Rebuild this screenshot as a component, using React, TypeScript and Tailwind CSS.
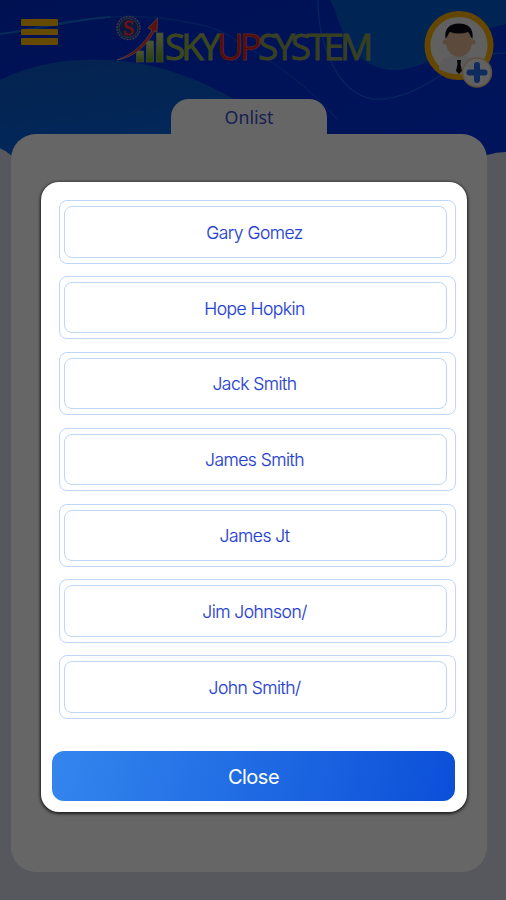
const NAMES = [
  "Gary Gomez",
  "Hope Hopkin",
  "Jack Smith",
  "James Smith",
  "James Jt",
  "Jim Johnson/",
  "John Smith/"
];

function HeaderWaves() {
  return (
    <svg className="absolute top-0 left-0" width="506" height="170" viewBox="0 0 506 170" fill="none">
      <defs>
        <linearGradient id="base" x1="0" y1="0" x2="1" y2="1">
          <stop offset="0" stopColor="#002cce" />
          <stop offset="1" stopColor="#0034e8" />
        </linearGradient>
        <linearGradient id="hill" x1="0.2" y1="0" x2="0.5" y2="1">
          <stop offset="0" stopColor="#0c58c8" />
          <stop offset="1" stopColor="#0464e4" />
        </linearGradient>
      </defs>
      <path d="M0 0H506V152Q496 152 487 155L400 160H20L11 155Q5 150 0 148Z" fill="url(#base)" />
      <path d="M0 80C40 61 75 59 106 60C155 61 205 82 232 98L260 160H20L11 155Q5 150 0 148Z" fill="url(#hill)" />
      <path d="M330 0C337 12 339 26 346 39C358 62 379 71 398 70C435 68 460 34 506 24V0Z" fill="#005ad2" />
      <path d="M0 34C50 25 105 12 160 18C200 23 226 29 241 45C270 58 310 88 337 119" stroke="#1268e0" strokeWidth="1.3" opacity="0.5" />
      <path d="M0 34C28 31 70 20 110 17" stroke="#1b8ee8" strokeWidth="1.8" opacity="0.6" />
      <path d="M318 0C318 40 335 93 373 99C401 101 426 85 443 74C465 59 485 53 506 53" stroke="#1973ee" strokeWidth="1.3" opacity="0.65" />
    </svg>
  );
}

function Logo() {
  return (
    <div className="flex w-[262px] items-start">
      <svg className="shrink-0" width="51" height="52" viewBox="114 14 51 52">
        <defs>
          <linearGradient id="bar" x1="0" y1="0" x2="0" y2="1">
            <stop offset="0" stopColor="#c0d98a" />
            <stop offset="1" stopColor="#64a010" />
          </linearGradient>
        </defs>
        <circle cx="128.500" cy="28" r="11.500" fill="#1c3c9c" stroke="#8c91b4" strokeWidth="1.500" strokeDasharray="2 1" />
        <circle cx="128.500" cy="28" r="9.500" fill="none" stroke="#8888ac" strokeWidth="0.800" />
        <text x="128.500" y="34.500" textAnchor="middle" fontFamily="Liberation Serif, serif" fontSize="20" fill="#ff3030" stroke="#ff3030" strokeWidth="0.800">S</text>
        <g fill="url(#bar)" stroke="#a9b49a" strokeWidth="0.700">
          <rect x="136.500" y="51" width="7" height="11" />
          <rect x="146.500" y="41" width="7" height="21" />
          <rect x="156.500" y="33" width="6.500" height="29" />
        </g>
        <path d="M117 60C134 54 145 43 152 30L148 28L157.500 18L157 32L154.500 31C146 46 135 57 117 60Z" fill="#ec2818" stroke="#d9b4ae" strokeWidth="0.700" />
      </svg>
      <div className="mt-[5px] flex font-['Open_Sans',sans-serif] text-[37px] leading-[54px] font-medium tracking-[-4px]">
        <span className="text-[#8fb52c] [-webkit-text-stroke:0.800px_#a1ad78]">SKY</span>
        <span className="text-[#e81512] [-webkit-text-stroke:0.800px_#cf5b55]">UP</span>
        <span className="text-[#8aa040] [-webkit-text-stroke:0.800px_#8ea070]">SYSTEM</span>
      </div>
    </div>
  );
}

function Avatar() {
  return (
    <svg width="72" height="80" viewBox="422 9 72 80">
      <circle cx="459" cy="45.500" r="31.500" fill="#f0f0f0" stroke="#fbb000" strokeWidth="6" />
      <path d="M439 69C439 59 446 57 453 56H465C473 57 479 60 479 69C468 76 450 76 439 69Z" fill="#e6e6ea" />
      <ellipse cx="459" cy="42" rx="13" ry="15" fill="#e6bc98" />
      <circle cx="445" cy="42" r="2.500" fill="#e6bc98" />
      <circle cx="473" cy="42" r="2.500" fill="#e6bc98" />
      <path d="M445.500 39C444 28 450 23.500 459 23.500C468 23.500 474 28 472.500 39C470 36 470 34 468 32C462 34 456 34 450 32C448 34 448 36 445.500 39Z" fill="#0c0c14" />
      <path d="M457 60H461L460.500 64L462 71L459 74L456 71L457.500 64Z" fill="#111" />
      <circle cx="477" cy="72.500" r="14.500" fill="#f3f3f6" stroke="#f2c391" strokeWidth="1.500" />
      <path d="M477 65V80M469.500 72.500H484.500" stroke="#286bea" strokeWidth="6" strokeLinecap="round" />
    </svg>
  );
}

function Header() {
  return (
    <header className="relative h-[99px]">
      <HeaderWaves />
      <div className="relative flex items-start">
        <button className="mt-[19px] ml-[21px] flex w-[37px] flex-col gap-[3px]">
          <span className="h-[6.500px] rounded-[1px] bg-[#ffb800]"></span>
          <span className="h-[6.500px] rounded-[1px] bg-[#ffb800]"></span>
          <span className="h-[6.500px] rounded-[1px] bg-[#ffb800]"></span>
        </button>
        <div className="mt-[14px] ml-[56px]"><Logo /></div>
        <div className="mt-[9px] ml-[46px]"><Avatar /></div>
      </div>
    </header>
  );
}

function NameRow({name}: {name: string}) {
  return (
    <li className="h-[63.500px] rounded-lg border border-[#bfd6f8] py-[5px] pr-[8px] pl-[4px]">
      <button className="flex h-full w-full items-center justify-center rounded-lg border border-[#bfd6f8] pt-[2px] pr-[2px] text-[17.500px] font-light tracking-[-0.530px] text-[#2440d0] [-webkit-text-stroke:0.150px_#2440d0]">
        {name}
      </button>
    </li>
  );
}

export default function App() {
  return (
    <div className="relative h-[900px] w-[506px] overflow-hidden bg-[#d9dbe8] font-['Inter',sans-serif]">
      <Header />
      <main className="relative mr-[19px] ml-[11px]">
        <div className="ml-[160px] flex h-[35px] w-[156px] justify-center rounded-t-[18px] bg-white pt-[5px] font-['Noto_Sans',sans-serif] text-[17.800px] text-[#3a50cc]">
          Onlist
        </div>
        <div className="h-[738px] rounded-[25px] bg-white"></div>
      </main>

      <div className="absolute inset-0 bg-black/60 pt-[182px] pl-[41px]">
        <div className="flex h-[630px] w-[426px] flex-col justify-between rounded-[18px] bg-white pt-[18px] pb-[11px] shadow-[0_1px_3px_1px_rgba(0,0,0,0.700)]">
          <ul className="mr-[11px] ml-[18px] flex flex-col gap-[12.400px]">
            {NAMES.map(name => <NameRow key={name} name={name} />)}
          </ul>
          <button className="mr-[12px] ml-[11px] h-[50px] rounded-xl bg-linear-[105deg] from-[#3486ee] to-[#0b4fd8] pt-[2px] text-[20px] tracking-[-0.500px] text-white">
            Close
          </button>
        </div>
      </div>
    </div>
  );
}
